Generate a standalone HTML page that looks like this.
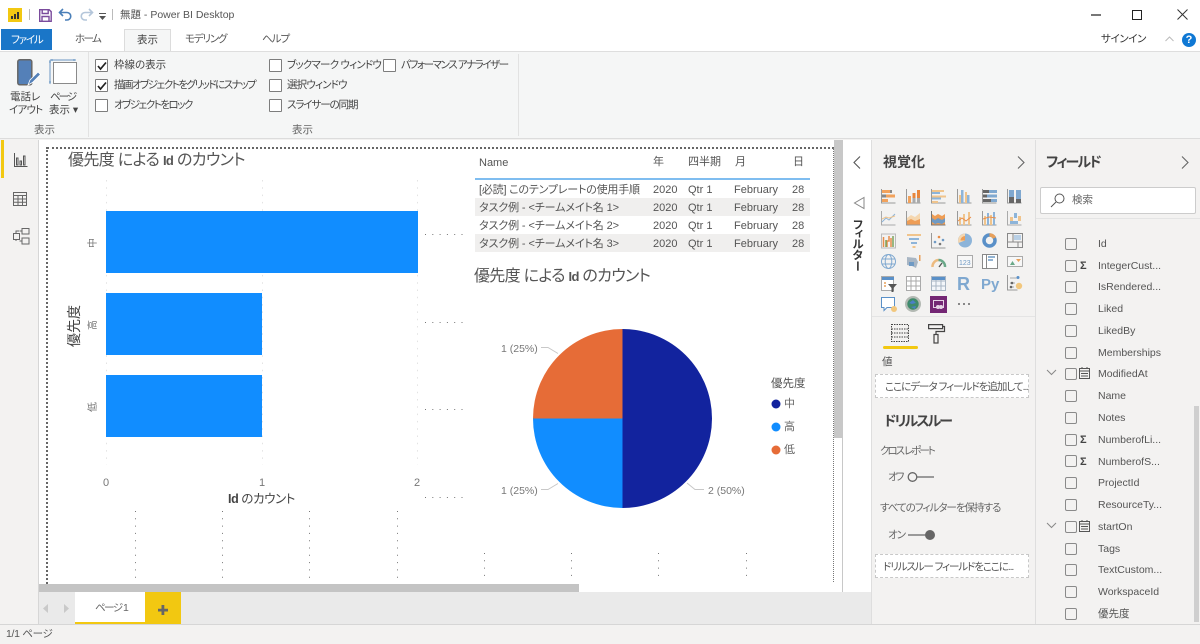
<!DOCTYPE html>
<html lang="ja"><head><meta charset="utf-8"><title>無題 - Power BI Desktop</title>
<style>
html,body{margin:0;padding:0;background:#f3f2f1}
#r{position:relative;width:1200px;height:644px;overflow:hidden;background:#f3f2f1;font-family:"Liberation Sans","Noto Sans CJK JP",sans-serif;color:#444;font-size:10.5px;font-feature-settings:"palt" 1}
.a,.t{position:absolute}
.t{white-space:nowrap;line-height:14px}
.c{position:absolute;width:11px;height:11px;border:1px solid #7d7d7d;background:#fff;border-radius:1px}
.f{position:absolute;width:10px;height:10px;border:1px solid #8a8a8a;border-radius:2px}
.fl{position:absolute;left:1098px;font-size:10.5px;color:#555;white-space:nowrap;line-height:14px}
svg{position:absolute;overflow:visible}
.row{position:absolute;left:475px;width:335px;height:18px}
.row span{position:absolute;top:3px;font-size:11px;line-height:14px;color:#555;white-space:nowrap}
</style></head><body><div id="r">

<!-- title bar -->
<div class="a" style="left:0;top:0;width:1200px;height:29px;background:#fff"></div>
<div class="a" style="left:8px;top:8px;width:14px;height:14px;background:#f2c811"></div>
<svg style="left:8px;top:8px" width="14" height="14"><path d="M3 11V8h2v3zM6 11V6h2v5zM9 11V4h2v7z" fill="#333"/></svg>
<div class="a" style="left:29px;top:9px;width:1px;height:11px;background:#bbb"></div>
<svg style="left:39px;top:9px" width="13" height="13" fill="none" stroke="#7a4b9c" stroke-width="1.4"><path d="M.7.7h9.5l2 2v9.6H.7zM3.2.9v3.6h6V.9M3 12V7.5h7V12"/></svg>
<svg style="left:58px;top:8px" width="15" height="13" fill="none" stroke="#4a7fb8" stroke-width="1.6"><path d="M5 1 1.5 4.5 5 8M2 4.5h7a3.6 3.6 0 0 1 0 7.500H7"/></svg>
<svg style="left:79px;top:8px" width="15" height="13" fill="none" stroke="#b4c6da" stroke-width="1.6"><path d="M10 1l3.500 3.500L10 8M13 4.500H6a3.600 3.600 0 0 0 0 7.500h2"/></svg>
<svg style="left:99px;top:13px" width="7" height="7" fill="#555"><path d="M0 0h7v1H0zM0 3h7L3.500 7z"/></svg>
<div class="a" style="left:112px;top:9px;width:1px;height:11px;background:#bbb"></div>
<div class="t" style="left:120px;top:8px;font-size:10.500px;color:#555">無題 - Power BI Desktop</div>
<div class="a" style="left:1091px;top:14px;width:10px;height:1.500px;background:#777"></div>
<div class="a" style="left:1132px;top:10px;width:8px;height:8px;border:1px solid #222"></div>
<svg style="left:1177px;top:9px" width="11" height="11" stroke="#333" stroke-width="1"><path d="M.5.500l10 10M10.500.500l-10 10"/></svg>

<!-- tab row -->
<div class="a" style="left:0;top:29px;width:1200px;height:22px;background:#fff"></div>
<div class="a" style="left:1px;top:29px;width:51px;height:21px;background:#1a76c8"></div>
<div class="t" style="left:11px;top:33px;color:#fff;font-size:10.500px;letter-spacing:-1.200px">ファイル</div>
<div class="t" style="left:75px;top:32px;color:#555;letter-spacing:-1.600px">ホーム</div>
<div class="a" style="left:124px;top:29px;width:47px;height:23px;background:#f5f6f6;border:1px solid #dcdcdc;border-bottom:0;box-sizing:border-box"></div>
<div class="t" style="left:137px;top:33px;color:#444">表示</div>
<div class="t" style="left:185px;top:32px;color:#555;letter-spacing:-1.200px">モデリング</div>
<div class="t" style="left:262px;top:32px;color:#555;letter-spacing:-1px">ヘルプ</div>
<div class="t" style="left:1101px;top:32px;color:#333;font-size:10.500px;letter-spacing:-.4px">サインイン</div>
<svg style="left:1165px;top:36px" width="9" height="6" fill="none" stroke="#bbb"><path d="M.5 5 4.500 1l4 4"/></svg>
<div class="a" style="left:1182px;top:33px;width:14px;height:14px;border-radius:50%;background:#0f78d4;color:#fff;font:bold 11px/14px 'Liberation Sans';text-align:center">?</div>

<!-- ribbon -->
<div class="a" style="left:0;top:51px;width:1200px;height:88px;background:#f5f6f6;border-top:1px solid #dedede;border-bottom:1px solid #dcdcdc;box-sizing:border-box"></div>
<div class="a" style="left:88px;top:52px;width:1px;height:85px;background:#e2e2e2"></div>
<div class="a" style="left:518px;top:54px;width:1px;height:82px;background:#e2e2e2"></div>
<svg style="left:17px;top:59px" width="24" height="30"><rect x=".8" y=".8" width="14" height="25" rx="2" fill="#5480b8" stroke="#666" stroke-width="1.500"/><path d="M11 26l2-5 8-8 2.500 2.500-8 8z" fill="#5480b8" stroke="#fff" stroke-width=".8"/></svg>
<svg style="left:49px;top:59px" width="28" height="26" fill="none"><path d="M1 1h26M1 25h.1M1 1v24M3 0v2M25 0v2M0 3h2M0 23h2" stroke="#6a97c4"/><rect x="4.500" y="3.500" width="23" height="21" fill="#fff" stroke="#8a8a8a" stroke-width="1"/></svg>
<div class="t" style="left:10px;top:90px">電話レ</div>
<div class="t" style="left:9px;top:103px;letter-spacing:-.8px">イアウト</div>
<div class="t" style="left:50px;top:90px;letter-spacing:-2px">ページ</div>
<div class="t" style="left:49px;top:103px">表示 ▾</div>
<div class="t" style="left:34px;top:123px;color:#666">表示</div>
<div class="t" style="left:292px;top:123px;color:#666">表示</div>

<div class="c" style="left:95px;top:59px"></div><svg style="left:97px;top:61px" width="10" height="10" fill="none" stroke="#222" stroke-width="1.700"><path d="M1 5l2.500 3L9 1.500"/></svg>
<div class="c" style="left:95px;top:79px"></div><svg style="left:97px;top:81px" width="10" height="10" fill="none" stroke="#222" stroke-width="1.700"><path d="M1 5l2.500 3L9 1.500"/></svg>
<div class="c" style="left:95px;top:99px"></div>
<div class="t" style="left:114px;top:58px">枠線の表示</div>
<div class="t" style="left:114px;top:78px;letter-spacing:-1.500px">描画オブジェクトをグリッドにスナップ</div>
<div class="t" style="left:114px;top:98px;letter-spacing:-1.500px">オブジェクトをロック</div>
<div class="c" style="left:269px;top:59px"></div>
<div class="c" style="left:269px;top:79px"></div>
<div class="c" style="left:269px;top:99px"></div>
<div class="t" style="left:287px;top:58px;letter-spacing:-.8px">ブックマーク ウィンドウ</div>
<div class="t" style="left:287px;top:78px;letter-spacing:-.85px">選択ウィンドウ</div>
<div class="t" style="left:287px;top:98px;letter-spacing:-1.100px">スライサーの同期</div>
<div class="c" style="left:383px;top:59px"></div>
<div class="t" style="left:401px;top:58px;letter-spacing:-1.400px">パフォーマンス アナライザー</div>

<!-- left nav -->
<div class="a" style="left:38px;top:140px;width:1px;height:484px;background:#d6d6d6"></div>
<div class="a" style="left:1px;top:140px;width:3px;height:38px;background:#f2c811"></div>
<svg style="left:14px;top:153px" width="14" height="14" fill="none" stroke="#555"><path d="M.5 0v13.500h13M2.500 12V5h1.500v7zM6 12V8h1.500v4zM9.500 12V3H11v9z"/></svg>
<svg style="left:13px;top:192px" width="14" height="14" fill="none" stroke="#666"><path d="M.500.500h13v13H.500zM.500 3.500h13M.500 7h13M.500 10.300h13M5 3.500v10M9.500 3.500v10"/></svg>
<svg style="left:13px;top:228px" width="17" height="17" fill="none" stroke="#666"><path d="M.500 5.500h6v6h-6zM9 .500h7v5.500H9zM9 10h7v6H9zM6.500 3h2.500M3 5.500V3h3M6.500 13H9M3 11.500V13"/></svg>

<!-- canvas -->
<div class="a" style="left:39px;top:140px;width:803px;height:452px;background:#fff"></div>
<div class="a" style="left:842px;top:140px;width:1px;height:484px;background:#c8c8c8"></div>
<div class="a" style="left:843px;top:140px;width:28px;height:484px;background:#fff"></div>
<div class="a" style="left:871px;top:140px;width:1px;height:484px;background:#dedede"></div>
<div class="a" style="left:47px;top:147px;width:787px;height:0;border-top:2px dotted #666"></div>
<div class="a" style="left:46px;top:147px;width:0;height:437px;border-left:2px dotted #666"></div>
<div class="a" style="left:833px;top:148px;width:0;height:434px;border-left:1px dotted #777"></div>

<svg style="left:0;top:0" width="1200" height="644">
 <g stroke="#e3e3e3" stroke-width="1" stroke-dasharray="1.500 5.800">
  <path d="M106.500 180V465M262.500 180V465M417.500 180V465"/>
 </g>
 <g stroke="#777" stroke-width="1" stroke-dasharray="1 6.300">
  <path d="M135.500 511V581M222.500 511V581M309.500 511V581M397.500 511V581M484.500 553V581M571.500 553V581M658.500 553V581M746.500 553V581"/>
  <path d="M425 234.500H466M425 322.500H466M425 409.500H466M425 497.500H466"/>
 </g>
 <rect x="106" y="211" width="312" height="62" fill="#118dff"/>
 <rect x="106" y="293" width="156" height="62" fill="#118dff"/>
 <rect x="106" y="375" width="156" height="62" fill="#118dff"/>
 <path d="M622.500 418.500V329a89.500 89.500 0 0 1 0 179z" fill="#12239e"/>
 <path d="M622.500 418.500V508a89.500 89.500 0 0 1-89.500-89.500z" fill="#118dff"/>
 <path d="M622.500 418.500H533a89.500 89.500 0 0 1 89.500-89.500z" fill="#e66c37"/>
 <g fill="none" stroke="#c8c8c8">
  <path d="M541 347.500h7l10 6M541 489.500h7l10-6M687 483l8 6.500h9"/>
 </g>
 <circle cx="776" cy="404" r="4.500" fill="#12239e"/>
 <circle cx="776" cy="427" r="4.500" fill="#118dff"/>
 <circle cx="776" cy="450" r="4.500" fill="#e66c37"/>
</svg>

<div class="t" style="left:68px;top:151px;font-size:16px;line-height:20px;color:#555;letter-spacing:-.65px">優先度 による <b style="font-size:13px">Id</b> のカウント</div>
<div class="t" style="left:89px;top:236px;font-size:10px;color:#777;transform:rotate(-90deg)">中</div>
<div class="t" style="left:89px;top:318px;font-size:10px;color:#777;transform:rotate(-90deg)">高</div>
<div class="t" style="left:89px;top:400px;font-size:10px;color:#777;transform:rotate(-90deg)">低</div>
<div class="t" style="left:53px;top:318px;font-size:14px;line-height:16px;color:#444;transform:rotate(-90deg)">優先度</div>
<div class="t" style="left:103px;top:476px;font-size:11px;color:#777">0</div>
<div class="t" style="left:259px;top:476px;font-size:11px;color:#777">1</div>
<div class="t" style="left:414px;top:476px;font-size:11px;color:#777">2</div>
<div class="t" style="left:228px;top:491px;font-size:12.500px;line-height:16px;color:#444;letter-spacing:-.4px"><b>Id</b> のカウント</div>

<!-- table -->
<div class="a" style="left:475px;top:178px;width:335px;height:2px;background:#7fbdf0"></div>
<div class="t" style="left:479px;top:156px;font-size:11px;color:#555">Name</div>
<div class="t" style="left:653px;top:155px;font-size:11px;color:#555">年</div>
<div class="t" style="left:688px;top:155px;font-size:11px;color:#555">四半期</div>
<div class="t" style="left:735px;top:155px;font-size:11px;color:#555">月</div>
<div class="t" style="left:793px;top:155px;font-size:11px;color:#555">日</div>
<div class="row" style="top:180px"><span style="left:4px;letter-spacing:-.2px">[必読] このテンプレートの使用手順</span><span style="left:178px">2020</span><span style="left:213px">Qtr 1</span><span style="left:259px">February</span><span style="left:317px">28</span></div>
<div class="row" style="top:198px;background:#f0efee"><span style="left:4px;letter-spacing:-.1px">タスク例 - &lt;チームメイト名 1&gt;</span><span style="left:178px">2020</span><span style="left:213px">Qtr 1</span><span style="left:259px">February</span><span style="left:317px">28</span></div>
<div class="row" style="top:216px"><span style="left:4px;letter-spacing:-.1px">タスク例 - &lt;チームメイト名 2&gt;</span><span style="left:178px">2020</span><span style="left:213px">Qtr 1</span><span style="left:259px">February</span><span style="left:317px">28</span></div>
<div class="row" style="top:234px;background:#f0efee"><span style="left:4px;letter-spacing:-.1px">タスク例 - &lt;チームメイト名 3&gt;</span><span style="left:178px">2020</span><span style="left:213px">Qtr 1</span><span style="left:259px">February</span><span style="left:317px">28</span></div>

<div class="t" style="left:474px;top:267px;font-size:16px;line-height:20px;color:#555;letter-spacing:-.7px">優先度 による <b style="font-size:13px">Id</b> のカウント</div>
<div class="t" style="left:501px;top:342px;font-size:10.500px;color:#777">1 (25%)</div>
<div class="t" style="left:501px;top:484px;font-size:10.500px;color:#777">1 (25%)</div>
<div class="t" style="left:708px;top:484px;font-size:10.500px;color:#777">2 (50%)</div>
<div class="t" style="left:771px;top:377px;font-size:11.500px;color:#555">優先度</div>
<div class="t" style="left:784px;top:397px;font-size:11px;color:#666">中</div>
<div class="t" style="left:784px;top:420px;font-size:11px;color:#666">高</div>
<div class="t" style="left:784px;top:443px;font-size:11px;color:#666">低</div>

<!-- scrollbars -->
<div class="a" style="left:834px;top:140px;width:8px;height:298px;background:#c8c8c8"></div>
<div class="a" style="left:39px;top:584px;width:540px;height:8px;background:#c4c4c4"></div>
<div class="a" style="left:579px;top:584px;width:263px;height:8px;background:#fff"></div>

<!-- page tabs -->
<div class="a" style="left:39px;top:592px;width:832px;height:32px;background:#eaeaea"></div>
<svg style="left:43px;top:604px" width="30" height="9" fill="#c9c9c9"><path d="M5 0v9L0 4.500zM21 0v9l5-4.500z"/></svg>
<div class="a" style="left:75px;top:592px;width:70px;height:32px;background:#fff;border-bottom:2px solid #f2c811;box-sizing:border-box"></div>
<div class="t" style="left:95px;top:601px;color:#666;letter-spacing:-1.500px">ページ 1</div>
<div class="a" style="left:145px;top:592px;width:36px;height:32px;background:#f2c811"></div>
<svg style="left:157px;top:604px" width="12" height="12"><path d="M4.500 1h2.800v3.700H11v2.800H7.300V11H4.500V7.500H1V4.700h3.500z" fill="#666"/></svg>

<!-- status -->
<div class="a" style="left:0;top:624px;width:1200px;height:20px;background:#f3f2f1;border-top:1px solid #d6d6d6;box-sizing:border-box"></div>
<div class="t" style="left:6px;top:627px;color:#555;font-size:10.500px;letter-spacing:-.3px">1/1 ページ</div>

<!-- filter pane -->
<svg style="left:853px;top:156px" width="8" height="13" fill="none" stroke="#555" stroke-width="1.100"><path d="M7 .500 1 6.500l6 6"/></svg>
<svg style="left:853px;top:197px" width="12" height="13" fill="none" stroke="#888"><path d="M11 .500v11L1.500 6z"/></svg>
<div class="t" style="left:850px;top:219px;font-size:11.500px;line-height:14px;font-weight:bold;color:#333;writing-mode:vertical-rl;font-feature-settings:'vpal' 1">フィルター</div>

<!-- viz pane -->
<div class="t" style="left:883px;top:153px;font-size:14px;font-weight:bold;line-height:18px;color:#444">視覚化</div>
<svg style="left:1017px;top:156px" width="8" height="13" fill="none" stroke="#666" stroke-width="1.100"><path d="M1 .500l6 6-6 6"/></svg>
<div class="a" style="left:1035px;top:140px;width:1px;height:484px;background:#dedede"></div>

<svg style="left:0;top:0" width="1200" height="644">
 <g id="viz">
  <g transform="translate(881 189)"><path d="M.500 0v14h14" fill="none" stroke="#999"/><rect x="1" y="1" width="8" height="3" fill="#f2a25c"/><rect x="9" y="1" width="2" height="3" fill="#888"/><rect x="1" y="5.500" width="4" height="3" fill="#888"/><rect x="5" y="5.500" width="9" height="3" fill="#f2a25c"/><rect x="1" y="10" width="6" height="3" fill="#f2a25c"/></g>
  <g transform="translate(906 189)"><path d="M.500 0v14h14" fill="none" stroke="#999"/><rect x="2" y="7" width="3" height="7" fill="#f2a25c"/><rect x="6.500" y="4" width="3" height="5" fill="#e8853b"/><rect x="6.500" y="9" width="3" height="5" fill="#aaa"/><rect x="11" y="1" width="3" height="8" fill="#e8853b"/><rect x="11" y="9" width="3" height="5" fill="#aaa"/></g>
  <g transform="translate(931 189)"><path d="M.500 0v14h14" fill="none" stroke="#999"/><rect x="1" y="1" width="12" height="2" fill="#f0c48c"/><rect x="1" y="3" width="8" height="2" fill="#8db4d9"/><rect x="1" y="6.500" width="14" height="2" fill="#f0c48c"/><rect x="1" y="8.500" width="9" height="2" fill="#8db4d9"/><rect x="1" y="12" width="6" height="2" fill="#f0c48c"/></g>
  <g transform="translate(957 189)"><path d="M.500 0v14h14" fill="none" stroke="#999"/><rect x="2" y="6" width="2" height="8" fill="#f0c48c"/><rect x="4" y="1" width="2.500" height="13" fill="#8db4d9"/><rect x="8" y="3" width="2" height="11" fill="#f0c48c"/><rect x="10" y="6" width="2.500" height="8" fill="#8db4d9"/></g>
  <g transform="translate(982 189)"><path d="M.500 0v14h14" fill="none" stroke="#999"/><rect x="1" y="1" width="6" height="3" fill="#666"/><rect x="7" y="1" width="8" height="3" fill="#7fa8d0"/><rect x="1" y="5.500" width="4" height="3" fill="#666"/><rect x="5" y="5.500" width="10" height="3" fill="#7fa8d0"/><rect x="1" y="10" width="8" height="3" fill="#666"/><rect x="9" y="10" width="6" height="3" fill="#7fa8d0"/></g>
  <g transform="translate(1007 189)"><path d="M.500 0v14h14" fill="none" stroke="#999"/><rect x="2" y="1" width="5" height="7" fill="#7fa8d0"/><rect x="2" y="8" width="5" height="6" fill="#666"/><rect x="9" y="1" width="5" height="9" fill="#7fa8d0"/><rect x="9" y="10" width="5" height="4" fill="#666"/></g>

  <g transform="translate(881 211)"><path d="M.500 0v14h14" fill="none" stroke="#aaa"/><path d="M1 11l4-4 3 2 6-6" fill="none" stroke="#8db4d9"/><path d="M1 8l4-2 3 1 6-2" fill="none" stroke="#f0c48c"/></g>
  <g transform="translate(906 211)"><path d="M1 14V7l4-3 4 2 5-4v12z" fill="#f5d7b0"/><path d="M1 14v-4l4-2 4 2 5-2v6z" fill="#ee9d55"/><path d="M.500 0v14h14" fill="none" stroke="#999"/></g>
  <g transform="translate(931 211)"><path d="M1 14V3l3 2 3-2 4 2 3-2v11z" fill="#ee9d55"/><path d="M1 11V7l3 2 3-2 4 2 3-2v4l-3 2-4-1-3 1z" fill="#6f9ac4"/><path d="M.500 0v14h14" fill="none" stroke="#777"/></g>
  <g transform="translate(957 211)"><path d="M.500 0v14h14" fill="none" stroke="#999"/><rect x="2" y="6" width="2" height="8" fill="#f0c48c"/><rect x="6" y="3" width="2" height="11" fill="#f0c48c"/><rect x="11" y="1" width="2" height="13" fill="#f0c48c"/><path d="M1 10l4-3 4 3 5-4" fill="none" stroke="#e88d4a"/></g>
  <g transform="translate(982 211)"><path d="M.500 0v14h14" fill="none" stroke="#999"/><rect x="2" y="5" width="2" height="9" fill="#f0c48c"/><rect x="5" y="2" width="2" height="12" fill="#8db4d9"/><rect x="8" y="4" width="2" height="10" fill="#f0c48c"/><rect x="11" y="1" width="2" height="13" fill="#8db4d9"/><path d="M1 8l6-2 7 1" fill="none" stroke="#e88d4a"/></g>
  <g transform="translate(1007 211)"><path d="M.500 0v14h14" fill="none" stroke="#aaa"/><rect x="3" y="6" width="3" height="5" fill="#f0c48c"/><rect x="7" y="2" width="3" height="5" fill="#8db4d9"/><rect x="11" y="5" width="3" height="5" fill="#f0c48c"/><rect x="3" y="10" width="8" height="3" fill="#8db4d9"/></g>

  <g transform="translate(881 233)"><path d="M.500 1h14v14h-14z" fill="none" stroke="#bbb"/><path d="M2.500 14V4M6 14V8h2V3M10 14V5" fill="none" stroke="#e88d4a" stroke-width="1.500"/><path d="M5 14V7M12 14V3" stroke="#7aa35c" stroke-width="1.500"/></g>
  <g transform="translate(906 233)"><path d="M1 1h14v2H1z" fill="#f0c48c"/><path d="M3 5h10v2H3z" fill="#8db4d9"/><path d="M5 9h6v2H5z" fill="#8db4d9"/><path d="M6.500 13h3v2h-3z" fill="#f0c48c"/></g>
  <g transform="translate(931 233)"><path d="M.500 0v15h14" fill="none" stroke="#999"/><circle cx="4" cy="9" r="1.300" fill="#6f9ac4"/><circle cx="8" cy="4" r="1.300" fill="#e88d4a"/><circle cx="12" cy="7" r="1.300" fill="#6f9ac4"/><circle cx="9" cy="11" r="1.300" fill="#777"/></g>
  <g transform="translate(957 233)"><circle cx="8" cy="7.500" r="7" fill="#8db4d9"/><path d="M8 7.500V.500A7 7 0 0 0 1.500 10z" fill="#f5d7b0"/><path d="M8 7.500V3A4.500 4.500 0 0 0 3.500 7.500z" fill="#ee9d55"/></g>
  <g transform="translate(982 233)"><circle cx="7.500" cy="7.500" r="5.500" fill="none" stroke="#5a90c8" stroke-width="3.500"/><path d="M7.500 2a5.500 5.500 0 0 1 5 3" fill="none" stroke="#e8a05a" stroke-width="3.500"/></g>
  <g transform="translate(1007 233)"><path d="M.500.500h15v14H.500zM.500 9h15M6 .500v8.500M11 9v5.500" fill="none" stroke="#888"/><rect x="7" y="2" width="7" height="5" fill="#b9d0e6"/></g>

  <g transform="translate(881 254)" fill="none" stroke="#7fa8d0"><circle cx="7.500" cy="7.500" r="7"/><ellipse cx="7.500" cy="7.500" rx="3.300" ry="7"/><path d="M1 5h13M1 10h13"/></g>
  <g transform="translate(906 254)"><path d="M1 3l9 1 2 4-2 6-4-2-5-1z" fill="#a9b6c4"/><rect x="3" y="8" width="5" height="4" fill="#6f9ac4"/><rect x="13" y="1" width="1.500" height="6" fill="#e8a05a"/></g>
  <g transform="translate(931 254)" fill="none" stroke-width="2.500"><path d="M1.500 13a6.500 6.500 0 0 1 6-7" stroke="#edbb80"/><path d="M7.500 6a6.500 6.500 0 0 1 6.500 7" stroke="#6aa888"/><path d="M8 13l3-4" stroke="#555" stroke-width="1.300"/></g>
  <g transform="translate(957 254)"><path d="M.500 1.500h15v12H.500z" fill="#f7f7f7" stroke="#aaa"/><text x="2" y="11" font-size="7" fill="#6f9ac4" font-family="Liberation Sans">123</text></g>
  <g transform="translate(982 254)"><path d="M.500.500h15v14H.500z" fill="#fff" stroke="#888"/><path d="M4.500.500v14" stroke="#888"/><path d="M6 3h7M6 6h5" stroke="#6f9ac4" stroke-width="1.400"/></g>
  <g transform="translate(1007 254)"><path d="M.500 2.500h15v10H.500z" fill="#f7f7f7" stroke="#aaa"/><path d="M3 11l2.500-4 2.500 4z" fill="#6aa888"/><path d="M9 5h5l-2.500 3z" fill="#e8a05a"/></g>

  <g transform="translate(881 276)"><path d="M.500.500h12v14H.500z" fill="#fff" stroke="#aaa"/><rect x="1" y="1" width="12" height="3" fill="#5a90c8"/><path d="M3 7h2M3 10h2" stroke="#e8a05a" stroke-width="1.500"/><path d="M7 8h9l-3.500 4v4h-2v-4z" fill="#555"/></g>
  <g transform="translate(906 276)"><path d="M.500.500h14v14H.500zM.500 5h14M.500 10h14M5 .500v14M10 .500v14" fill="#fff" stroke="#aaa"/></g>
  <g transform="translate(931 276)"><path d="M.500.500h14v14H.500zM.500 5h14M.500 10h14M5 .500v14M10 .500v14" fill="#f3f6fa" stroke="#a9b6c4"/><rect x="1" y="1" width="13" height="3" fill="#5a90c8"/></g>
  <text x="957" y="290" font-family="Liberation Sans" font-weight="bold" font-size="18" fill="#7fa8d0">R</text>
  <text x="981" y="289" font-family="Liberation Sans" font-weight="bold" font-size="15" fill="#7fa8d0">Py</text>
  <g transform="translate(1007 275)"><path d="M.500 0v15h10" fill="none" stroke="#999"/><path d="M3 3h9M3 8h5M3 12h4" stroke="#aaa"/><circle cx="11" cy="2.500" r="1.500" fill="#5a90c8"/><circle cx="5" cy="8" r="1.300" fill="#666"/><circle cx="4" cy="12" r="1.300" fill="#666"/><circle cx="12" cy="11" r="3.200" fill="#f2c77d"/></g>

  <g transform="translate(881 297)"><path d="M.500.500h13v10H6l-3 3v-3H.500z" fill="#fff" stroke="#5a90c8"/><circle cx="13" cy="12" r="3" fill="#f2c77d"/></g>
  <g transform="translate(905 296)"><circle cx="8" cy="8" r="8" fill="#b3b9b3"/><circle cx="8" cy="8" r="5.700" fill="#3f8a6a"/><path d="M4 7l4-3 3 3-4 1zM6 11l5-1-1 3z" fill="#4a7fc8"/></g>
  <rect x="930" y="296" width="17" height="17" fill="#742774"/>
  <g transform="translate(933 300)"><path d="M.500.500h10v7H.500z" fill="none" stroke="#e6d3e6"/><circle cx="5" cy="7" r="2" fill="#e6d3e6"/><circle cx="8" cy="7" r="2" fill="#e6d3e6"/></g>
  <g fill="#666"><circle cx="959" cy="304" r="1"/><circle cx="964" cy="304" r="1"/><circle cx="969" cy="304" r="1"/></g>
 </g>
 <g transform="translate(891 324)" fill="none" stroke="#444" stroke-dasharray="1.500 1"><path d="M.500.500h17v17H.500zM.500 5h17M.500 9h17M.500 13h17"/></g>
 <g transform="translate(928 324)" fill="none" stroke="#444" stroke-width="1.200"><path d="M.600.600h14v4h-14zM14.500 2.500h2v5H8v3"/><rect x="6" y="10.500" width="4" height="8.500"/></g>
</svg>
<div class="a" style="left:872px;top:316px;width:163px;height:1px;background:#e4e4e4"></div>
<div class="a" style="left:883px;top:346px;width:35px;height:3px;background:#f2c811;border-radius:2px"></div>

<div class="t" style="left:882px;top:355px;color:#555">値</div>
<div class="a" style="left:875px;top:374px;width:154px;height:24px;background:#fff;border:1px dashed #c8c8c8;box-sizing:border-box"></div>
<div class="t" style="left:885px;top:380px;color:#555;font-size:10.500px;letter-spacing:-1px">ここにデータ フィールドを追加して...</div>
<div class="t" style="left:884px;top:411px;font-size:14px;line-height:20px;font-weight:bold;color:#444;letter-spacing:-1.900px">ドリルスルー</div>
<div class="t" style="left:880px;top:444px;color:#666;letter-spacing:-2px">クロス レポート</div>
<div class="t" style="left:888px;top:470px;color:#666;letter-spacing:-2px">オフ</div>
<svg style="left:906px;top:470px" width="30" height="14" fill="none" stroke="#666" stroke-width="1.300"><circle cx="6.500" cy="7" r="4.300"/><path d="M11 7h17"/></svg>
<div class="t" style="left:880px;top:501px;color:#666;letter-spacing:-1px">すべてのフィルターを保持する</div>
<div class="t" style="left:888px;top:528px;color:#666;letter-spacing:-1px">オン</div>
<svg style="left:906px;top:528px" width="30" height="14"><path d="M2 7h20" stroke="#666" stroke-width="1.300"/><circle cx="24" cy="7" r="5" fill="#666"/></svg>
<div class="a" style="left:875px;top:554px;width:154px;height:24px;background:#fff;border:1px dashed #c8c8c8;box-sizing:border-box"></div>
<div class="t" style="left:883px;top:560px;color:#555;font-size:10.500px;letter-spacing:-1.100px">ドリルスルー フィールドをここに...</div>

<!-- fields pane -->
<div class="t" style="left:1046px;top:153px;font-size:14px;line-height:18px;font-weight:bold;color:#444;letter-spacing:-1.800px">フィールド</div>
<svg style="left:1181px;top:156px" width="8" height="13" fill="none" stroke="#666" stroke-width="1.100"><path d="M1 .500l6 6-6 6"/></svg>
<div class="a" style="left:1040px;top:187px;width:156px;height:27px;background:#fff;border:1px solid #ccc;border-radius:2px;box-sizing:border-box"></div>
<svg style="left:1050px;top:193px" width="15" height="15" fill="none" stroke="#555"><circle cx="9.500" cy="5.500" r="4.500"/><path d="M6 9 1 14"/></svg>
<div class="t" style="left:1072px;top:193px;color:#666">検索</div>
<div class="a" style="left:1036px;top:218px;width:164px;height:1px;background:#e4e4e4"></div>
<div class="a" style="left:1194px;top:406px;width:5px;height:216px;background:#cfcfcf"></div>

<div class="f" style="left:1065px;top:238px"></div><div class="fl" style="top:237px">Id</div>
<div class="f" style="left:1065px;top:260px"></div><div class="fl" style="top:259px">IntegerCust...</div>
<div class="f" style="left:1065px;top:281px"></div><div class="fl" style="top:280px">IsRendered...</div>
<div class="f" style="left:1065px;top:303px"></div><div class="fl" style="top:302px">Liked</div>
<div class="f" style="left:1065px;top:325px"></div><div class="fl" style="top:324px">LikedBy</div>
<div class="f" style="left:1065px;top:347px"></div><div class="fl" style="top:346px">Memberships</div>
<div class="f" style="left:1065px;top:368px"></div><div class="fl" style="top:367px">ModifiedAt</div>
<div class="f" style="left:1065px;top:390px"></div><div class="fl" style="top:389px">Name</div>
<div class="f" style="left:1065px;top:412px"></div><div class="fl" style="top:411px">Notes</div>
<div class="f" style="left:1065px;top:434px"></div><div class="fl" style="top:433px">NumberofLi...</div>
<div class="f" style="left:1065px;top:455px"></div><div class="fl" style="top:455px">NumberofS...</div>
<div class="f" style="left:1065px;top:477px"></div><div class="fl" style="top:476px">ProjectId</div>
<div class="f" style="left:1065px;top:499px"></div><div class="fl" style="top:498px">ResourceTy...</div>
<div class="f" style="left:1065px;top:521px"></div><div class="fl" style="top:520px">startOn</div>
<div class="f" style="left:1065px;top:543px"></div><div class="fl" style="top:542px">Tags</div>
<div class="f" style="left:1065px;top:564px"></div><div class="fl" style="top:563px">TextCustom...</div>
<div class="f" style="left:1065px;top:586px"></div><div class="fl" style="top:585px">WorkspaceId</div>
<div class="f" style="left:1065px;top:608px"></div><div class="fl" style="top:607px">優先度</div>

<div class="t" style="left:1080px;top:259px;font-weight:bold;font-size:11px;color:#444">Σ</div>
<div class="t" style="left:1080px;top:433px;font-weight:bold;font-size:11px;color:#444">Σ</div>
<div class="t" style="left:1080px;top:455px;font-weight:bold;font-size:11px;color:#444">Σ</div>
<svg style="left:0;top:0" width="1200" height="644" fill="none" stroke="#555">
 <path d="M1047 370l4.500 4.500 4.500-4.500M1047 523l4.500 4.500 4.500-4.500" stroke="#888"/>
 <g id="cal1"><path d="M1079.500 368.500h10v10h-10zM1079.500 371h10M1082 367v2M1087 367v2M1081 373.500h7M1081 376h7" /></g>
 <path d="M1079.500 521.500h10v10h-10zM1079.500 524h10M1082 520v2M1087 520v2M1081 526.500h7M1081 529h7"/>
</svg>

</div></body></html>
